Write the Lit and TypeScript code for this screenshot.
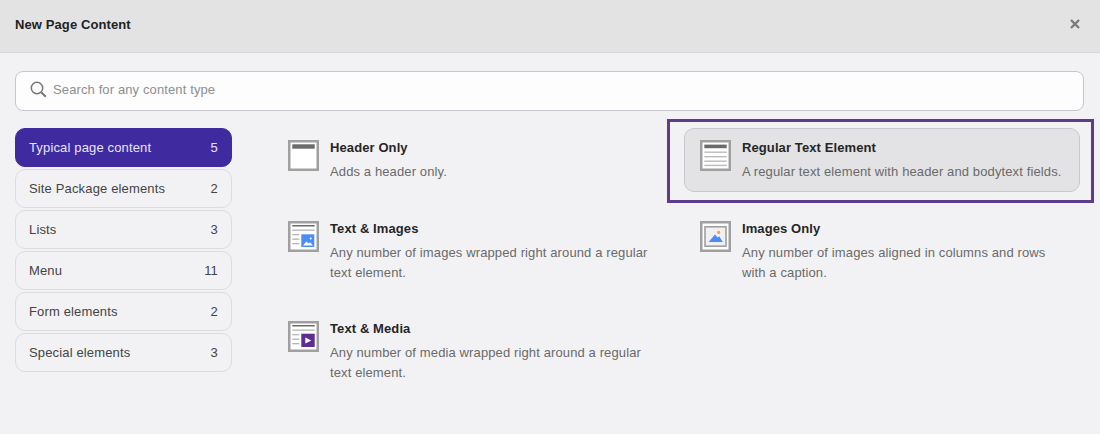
import { LitElement, html, css, svg } from "lit";
import { customElement } from "lit/decorators.js";

const frame = (inner: unknown) => html`<svg class="ico" width="31" height="31" viewBox="0 0 31 31" aria-hidden="true">
  <rect x="1.25" y="1.25" width="28.5" height="28.5" fill="#fff" stroke="#a0a0a0" stroke-width="2.5"/>${inner}</svg>`;

const textLines = svg`
  <rect x="4.3" y="4" width="22.4" height="1.5" fill="#6b6b6b"/>
  <rect x="4.3" y="8.5" width="22.4" height="1.3" fill="#b4b4b4"/>
  <rect x="4.3" y="13" width="7" height="1.3" fill="#b4b4b4"/>
  <rect x="4.3" y="17.5" width="7" height="1.3" fill="#b4b4b4"/>
  <rect x="4.3" y="22" width="7" height="1.3" fill="#b4b4b4"/>`;

const icons: Record<string, unknown> = {
  header: frame(svg`<rect x="4.3" y="4.3" width="22.4" height="4.4" fill="#6b6b6b"/>`),
  text: frame(svg`
    <rect x="4.3" y="4.6" width="22.4" height="3.6" fill="#6b6b6b"/>
    <rect x="4.3" y="11.5" width="22.4" height="1.4" fill="#bbb"/>
    <rect x="4.3" y="16" width="22.4" height="1.4" fill="#bbb"/>
    <rect x="4.3" y="20.5" width="22.4" height="1.4" fill="#bbb"/>
    <rect x="4.3" y="24.7" width="22.4" height="1.4" fill="#bbb"/>`),
  textpic: frame(svg`${textLines}
    <rect x="13.3" y="13.3" width="13" height="12.7" fill="#4c8cf5"/>
    <path d="M15 24.5l3.5-4 2 2 1.5-1.2 3 3.2z" fill="#fff"/>
    <circle cx="22.7" cy="17.5" r="1" fill="#fff"/>`),
  image: frame(svg`
    <rect x="5" y="5.8" width="21" height="19.4" fill="#f0f0f3" stroke="#a0a0a0" stroke-width="1.6"/>
    <path d="M8.6 21l6.4-7.4 2.6 2.8 1.6-1.2 3.6 5.8z" fill="#4c8cf5"/>
    <circle cx="18.7" cy="11.4" r="1.6" fill="#f5a33c"/>`),
  media: frame(svg`${textLines}
    <rect x="13.3" y="12.7" width="13.4" height="13.3" fill="#5e2d91"/>
    <path d="M17.3 16.4l6 3-6 3z" fill="#fff"/>`),
};

const cats = [
  ["Typical page content", 5],
  ["Site Package elements", 2],
  ["Lists", 3],
  ["Menu", 11],
  ["Form elements", 2],
  ["Special elements", 3],
] as const;

const items = [
  ["header", "Header Only", "Adds a header only.", false],
  ["text", "Regular Text Element", "A regular text element with header and bodytext fields.", true],
  ["textpic", "Text & Images", "Any number of images wrapped right around a regular text element.", false],
  ["image", "Images Only", "Any number of images aligned in columns and rows with a caption.", false],
  ["media", "Text & Media", "Any number of media wrapped right around a regular text element.", false],
] as const;

@customElement("app-root")
export class AppRoot extends LitElement {
  static styles = css`
    :host {
      display: block;
      width: 1100px;
      height: 434px;
      overflow: hidden;
      background: #f2f2f5;
      font-family: "Liberation Sans", Arial, sans-serif;
      font-size: 13px;
      color: #2d2d2d;
    }
    .head {
      height: 52px;
      box-sizing: border-box;
      background: #e3e3e3;
      border-bottom: 0;
      box-shadow: 0 1px 0 #d8d8da;
      display: flex;
      align-items: center;
      justify-content: space-between;
      padding: 0 20px 4px 15px;
    }
    .head h1 { margin: 0; font-size: 13px; font-weight: 700; color: #222; letter-spacing: 0.1px; }
    .close { display: block; }
    .body { padding: 19px 16px 0 15px; }
    .search {
      height: 40px;
      box-sizing: border-box;
      background: #fdfdfd;
      border: 1px solid #c6c6ce;
      border-radius: 8px;
      display: flex;
      align-items: center;
      gap: 6px;
      padding: 0 14px 3px;
      color: #8e8e8e;
      letter-spacing: 0.12px;
    }
    .search svg { flex: none; }
    .main {
      display: grid;
      grid-template-columns: 217px 1fr;
      column-gap: 40px;
      margin-top: 17px;
      padding-right: 4px;
    }
    .cats { display: flex; flex-direction: column; gap: 2px; }
    .cat {
      height: 39px;
      box-sizing: border-box;
      display: flex;
      align-items: center;
      justify-content: space-between;
      padding: 0 13px;
      border: 1px solid #dcdce0;
      border-radius: 10px;
      color: #444;
      letter-spacing: 0.15px;
    }
    .cat.on { background: #402aa0; border-color: #402aa0; color: #e8e5f5; }
    .grid {
      display: grid;
      grid-template-columns: 396px 396px;
      column-gap: 16px;
      row-gap: 16px;
      align-items: start;
    }
    .item {
      position: relative;
      display: flex;
      gap: 11px;
      box-sizing: border-box;
      min-height: 65px;
      padding: 11px 15px 9px;
      border: 1px solid transparent;
      border-radius: 10px;
    }
    .item.on { background: #e3e3e5; border-color: #c8c8d0; height: 64px; min-height: 64px; margin-bottom: 1px; }
    .item.on::after {
      content: "";
      position: absolute;
      top: -10px;
      bottom: -12px;
      left: -18px;
      right: -15px;
      border: 3px solid #5f3a8e;
      pointer-events: none;
    }
    .ico { flex: none; display: block; }
    .item h2 { margin: 0 0 6px; font-size: 13px; line-height: 16px; font-weight: 700; color: #262626; letter-spacing: 0.1px; }
    .item p { margin: 0; font-size: 13px; line-height: 20px; color: #6a6a6a; letter-spacing: 0.12px; }
  `;

  render() {
    return html`
      <div class="head">
        <h1>New Page Content</h1>
        <svg class="close" width="10" height="10" viewBox="0 0 10 10" aria-hidden="true">
          <path d="M1 1l8 8M9 1l-8 8" stroke="#777" stroke-width="2.2" fill="none"/>
        </svg>
      </div>
      <div class="body">
        <div class="search">
          <svg width="17" height="17" viewBox="0 0 17 17" aria-hidden="true">
            <circle cx="7" cy="7" r="5.7" fill="none" stroke="#777" stroke-width="1.5"/>
            <path d="M11.2 11.2l4.6 4.6" stroke="#777" stroke-width="2" fill="none"/>
          </svg>
          <span>Search for any content type</span>
        </div>
        <div class="main">
          <div class="cats">
            ${cats.map(([n, c], i) => html`<div class="cat ${i === 0 ? "on" : ""}"><span>${n}</span><span>${c}</span></div>`)}
          </div>
          <div class="grid">
            ${items.map(([ic, t, d, on]) => html`
              <div class="item ${on ? "on" : ""}">
                ${icons[ic]}
                <div><h2>${t}</h2><p>${d}</p></div>
              </div>`)}
          </div>
        </div>
      </div>
    `;
  }
}
